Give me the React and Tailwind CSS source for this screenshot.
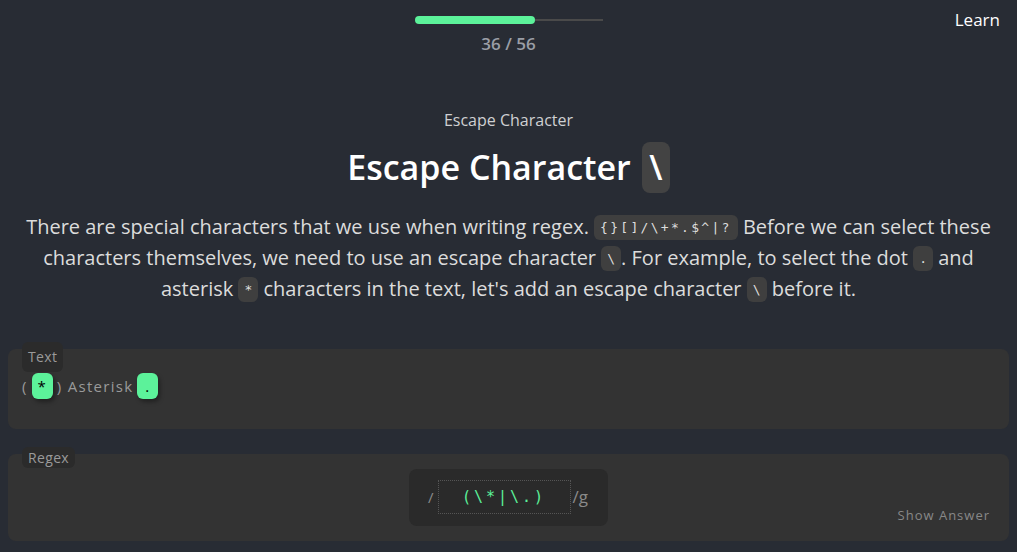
import React from "react";

function Code({ children, wide }) {
  return (
    <code
      className={
        wide
          ? "inline-block rounded-md bg-[#3f3f3f] px-[6px] py-[1px] align-[2px] font-['DejaVu_Sans_Mono',monospace] text-[13px] leading-[23px] tracking-[2.3px] text-[#ddd]"
          : "inline-block rounded-md bg-[#3f3f3f] px-[6px] py-[1px] align-[2px] font-['DejaVu_Sans_Mono',monospace] text-[13px] leading-[23px] text-[#ddd]"
      }
    >
      {children}
    </code>
  );
}

function Mark({ children }) {
  return (
    <span className="mx-[4px] inline-block h-[26px] w-[21px] rounded-md bg-[#5cf29a] text-center leading-[26px] text-black shadow-[2px_3px_4px_rgba(0,0,0,0.35)]">
      {children}
    </span>
  );
}

export default function App() {
  return (
    <div className="h-[552px] w-full overflow-hidden bg-[#282c34] font-['Open_Sans',sans-serif] text-white">
      {/* header */}
      <div className="relative flex flex-col items-center pt-[16px]">
        <div className="flex h-[8px] w-[188px] items-center">
          <div className="h-[8px] w-[120px] rounded-full bg-[#5cf29a]" />
          <div className="h-[2px] flex-1 bg-[#4a4a4a]" />
        </div>
        <div className="mt-[7px] text-[17px] font-semibold text-[#9a9ea6]">36 / 56</div>
        <div className="absolute right-[17px] top-[7px] text-[17px] text-white">Learn</div>
      </div>

      {/* intro */}
      <div className="mt-[51px] flex flex-col items-center">
        <div className="text-[16px] text-[#cfd0d2]">Escape Character</div>
        <h1 className="mt-[10px] flex items-center text-[34px] font-semibold">
          Escape Character
          <span className="ml-[11px] inline-flex h-[51px] w-[28px] items-center justify-center rounded-lg bg-[#434343]">\</span>
        </h1>
        <p className="mt-[18px] w-full px-[10px] text-center text-[20px] leading-[31px] text-[#dcdcdc]">
          There are special characters that we use when writing regex. <Code wide>{"{}[]/\\+*.$^|?"}</Code> Before we can select these characters themselves, we need to use an escape character <Code>\</Code>. For example, to select the dot <Code>.</Code> and asterisk <Code>*</Code> characters in the text, let's add an escape character <Code>\</Code> before it.
        </p>
      </div>

      {/* text panel */}
      <div className="relative mx-[8px] mt-[45px] h-[80px] rounded-lg bg-[#333333] px-[14px] pt-[24px]">
        <span className="absolute left-[14px] top-[-7px] flex h-[30px] items-center rounded-md bg-[#2b2b2b] px-[6px] text-[14px] tracking-wide text-[#9a9a9a]">Text</span>
        <div className="text-[15px] tracking-[1.3px] text-[#9a9a9a]">
          (<Mark>*</Mark>) Asterisk<Mark>.</Mark>
        </div>
      </div>

      {/* regex panel */}
      <div className="relative mx-[8px] mt-[25px] h-[87px] rounded-lg bg-[#333333]">
        <span className="absolute left-[14px] top-[-7px] flex h-[21px] items-center rounded-md bg-[#2b2b2b] px-[6px] text-[14px] tracking-wide text-[#9a9a9a]">Regex</span>
        <div className="flex justify-center pt-[15px]">
          <div className="flex h-[57px] w-[199px] items-center rounded-lg bg-[#2a2a2a] px-[19px] text-[#8a8a8a]">
            <span className="text-[15px]">/</span>
            <div className="ml-[4px] flex h-[34px] w-[133px] items-center justify-center border border-dotted border-[#555] font-['DejaVu_Sans_Mono',monospace] text-[15px] tracking-[3px] text-[#5cf29a]">
              (\*|\.)
            </div>
            <span className="ml-[2px] text-[17px]">/g</span>
          </div>
        </div>
        <div className="absolute bottom-[15px] right-[19px] text-[13px] tracking-[1px] text-[#888]">Show Answer</div>
      </div>
    </div>
  );
}
